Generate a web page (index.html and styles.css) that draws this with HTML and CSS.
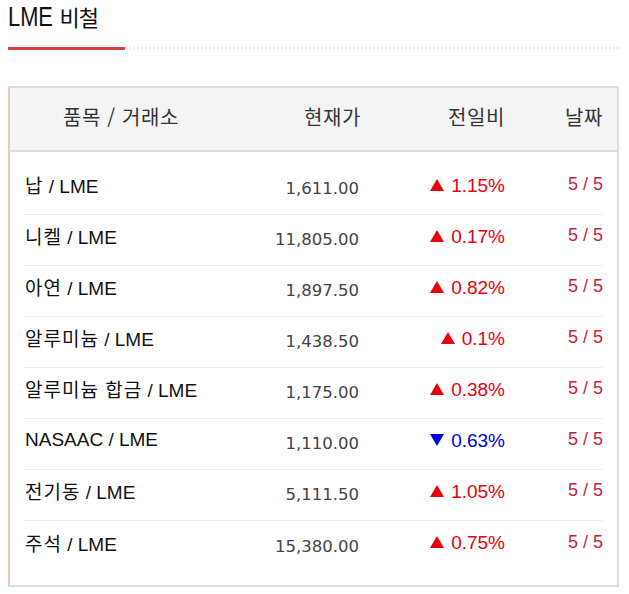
FILE: index.html
```html
<!DOCTYPE html>
<html lang="ko">
<head>
<meta charset="utf-8">
<title>LME 비철</title>
<link rel="stylesheet" href="styles.css">
</head>
<body>
<div class="wrap">
  <h2 class="title"><span class="lat">LME</span><span class="kor">비철</span></h2>
  <div class="rule"><div class="rule-red"></div><div class="rule-dots"></div></div>

  <div class="box">
    <div class="thead">
      <div class="c1">품목 / 거래소</div>
      <div class="c2">현재가</div>
      <div class="c3">전일비</div>
      <div class="c4">날짜</div>
    </div>
    <div class="tbody">
      <div class="row">
        <div class="name"><span class="ko">납</span> / LME</div>
        <div class="price">1,611.00</div>
        <div class="chg up"><span class="tri"></span>1.15%</div>
        <div class="date">5 / 5</div>
      </div>
      <div class="row">
        <div class="name"><span class="ko">니켈</span> / LME</div>
        <div class="price">11,805.00</div>
        <div class="chg up"><span class="tri"></span>0.17%</div>
        <div class="date">5 / 5</div>
      </div>
      <div class="row">
        <div class="name"><span class="ko">아연</span> / LME</div>
        <div class="price">1,897.50</div>
        <div class="chg up"><span class="tri"></span>0.82%</div>
        <div class="date">5 / 5</div>
      </div>
      <div class="row">
        <div class="name"><span class="ko">알루미늄</span> / LME</div>
        <div class="price">1,438.50</div>
        <div class="chg up"><span class="tri"></span>0.1%</div>
        <div class="date">5 / 5</div>
      </div>
      <div class="row">
        <div class="name"><span class="ko">알루미늄 합금</span> / LME</div>
        <div class="price">1,175.00</div>
        <div class="chg up"><span class="tri"></span>0.38%</div>
        <div class="date">5 / 5</div>
      </div>
      <div class="row">
        <div class="name">NASAAC / LME</div>
        <div class="price">1,110.00</div>
        <div class="chg down"><span class="tri"></span>0.63%</div>
        <div class="date">5 / 5</div>
      </div>
      <div class="row">
        <div class="name"><span class="ko">전기동</span> / LME</div>
        <div class="price">5,111.50</div>
        <div class="chg up"><span class="tri"></span>1.05%</div>
        <div class="date">5 / 5</div>
      </div>
      <div class="row">
        <div class="name"><span class="ko">주석</span> / LME</div>
        <div class="price">15,380.00</div>
        <div class="chg up"><span class="tri"></span>0.75%</div>
        <div class="date">5 / 5</div>
      </div>
    </div>
  </div>
</div>
</body>
</html>
```

FILE: styles.css
```css
html, body {
  margin: 0;
  padding: 0;
  background: #fff;
}
body {
  padding: 8px;
  font-family: "Liberation Sans", Arial, sans-serif;
  color: #111;
}
.wrap {
  width: 611px;
}
.title {
  margin: -3px 0 0;
  height: 42px;
  font-weight: normal;
  line-height: 22px;
  color: #111;
  white-space: nowrap;
}
.title .lat {
  display: inline-block;
  font-family: "Liberation Sans", Arial, sans-serif;
  font-size: 28px;
  transform: scaleX(0.78);
  transform-origin: 0 50%;
  margin-right: -6px;
}
.title .kor {
  font-family: "Noto Sans CJK KR", sans-serif;
  font-size: 22px;
  letter-spacing: -1px;
}
.rule {
  display: flex;
  align-items: flex-start;
}
.rule-red {
  width: 117px;
  height: 3px;
  background: #d63f3f;
}
.rule-dots {
  flex: 1;
  border-top: 2px dotted #e8e8e8;
}
.box {
  margin-top: 36px;
  border: 2px solid #dcdcdc;
  border-left-color: #f3c4c4;
}
.thead {
  display: grid;
  grid-template-columns: 192px 142px 146px 98px;
  padding: 0 15px 6px;
  box-sizing: border-box;
  height: 64px;
  align-items: center;
  background: #f4f4f4;
  border-bottom: 2px solid #dcdcdc;
  font-family: "Noto Sans CJK KR", sans-serif;
  font-size: 20px;
  letter-spacing: 0.6px;
  color: #333;
}
.thead .c1 { text-align: center; }
.thead .c2, .thead .c3, .thead .c4 { text-align: right; }
.thead .c2 { margin-right: -2px; }
.tbody {
  padding: 12px 15px 13px;
}
.row {
  display: grid;
  grid-template-columns: 192px 142px 146px 98px;
  align-items: center;
  height: 51px;
  box-sizing: border-box;
  padding-bottom: 9px;
  border-bottom: 1px dotted #dadada;
}
.row:last-child {
  border-bottom: none;
}
.name {
  font-size: 19px;
  color: #111;
  white-space: nowrap;
}
.ko {
  font-family: "Noto Sans CJK KR", sans-serif;
  font-size: 19px;
  letter-spacing: 1px;
}
.price {
  text-align: right;
  font-family: "DejaVu Sans", sans-serif;
  font-size: 16.5px;
  color: #444;
  padding-top: 8px;
}
.chg {
  text-align: right;
  font-size: 19px;
  white-space: nowrap;
  padding-top: 2px;
}
.chg.up { color: #e8000b; }
.chg.down { color: #0000dd; }
.tri {
  display: inline-block;
  width: 0;
  height: 0;
  border-left: 7px solid transparent;
  border-right: 7px solid transparent;
  margin-right: 7px;
  vertical-align: 1px;
}
.up .tri {
  border-bottom: 12px solid #e8000b;
}
.down .tri {
  border-top: 12px solid #0000dd;
}
.date {
  text-align: right;
  font-size: 18px;
  color: #c41f3e;
}
```
